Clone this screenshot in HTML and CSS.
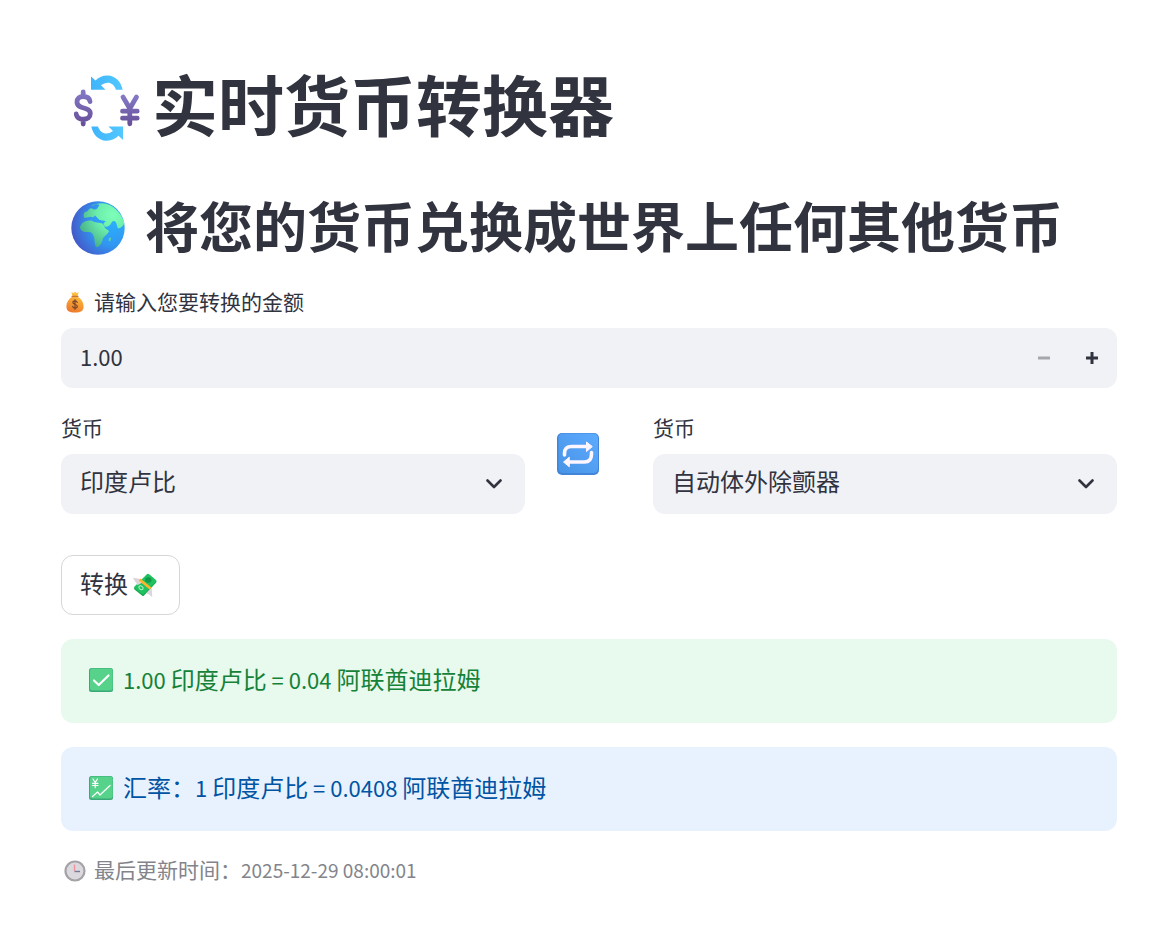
FILE: index.html
```html
<!DOCTYPE html>
<html lang="zh-CN">
<head>
<meta charset="utf-8">
<meta name="viewport" content="width=device-width, initial-scale=1">
<title>实时货币转换器</title>
<link rel="stylesheet" href="styles.css">
</head>
<body>
<main class="page">
  <h1 class="title">
    <svg class="title-icon" viewBox="0 0 66 66" aria-hidden="true">
      <defs>
        <linearGradient id="arrow" x1="0" x2="1" y1="0" y2="0"><stop offset="0" stop-color="#3fb4fb"/><stop offset="1" stop-color="#52c8ff"/></linearGradient>
        <linearGradient id="sign" x1="0" x2="0" y1="0" y2="1"><stop offset="0" stop-color="#8378c4"/><stop offset="1" stop-color="#68509a"/></linearGradient>
      </defs>
      <path d="M17 1.500v13.200h14.500L27 10.200c6-4.500 12.500-3 15 4.500h6.700C47 6.500 41 .8 34 .6 28.500.4 24.500 2.500 21.500 5.500Z" fill="url(#arrow)"/>
      <path d="M49 65V51.500H34.500L39 56c-6 4.500-12.500 3-15-4.500h-6.700C19 60 25 65.500 32 65.700c5.500.2 9.500-1.900 12.500-4.900Z" fill="url(#arrow)"/>
      <g fill="none" stroke="url(#sign)" stroke-width="4.800" stroke-linecap="round" stroke-linejoin="round">
        <path d="M16 26.500c-.5-3.500-3.400-5-6.800-5C5.500 21.500 3 23.500 3 27c0 8 13.300 4 13.300 11.500 0 3.700-3 5.700-7 5.700-3.800 0-6.600-1.700-7.100-5.200M9.200 17v4.500M9.200 44.500v4.500"/>
        <path d="M49 22l6.800 11.500L62.500 22M55.800 33.500v15.300M48.500 36.200h14.700M48.500 43.200h14.700"/>
      </g>
    </svg>
    <span class="title-text">实时货币转换器</span>
  </h1>
  <h2 class="subtitle">
    <svg class="subtitle-icon" viewBox="0 0 54 54" aria-hidden="true">
      <defs>
        <radialGradient id="sea" cx=".8" cy=".4" r=".85"><stop offset="0" stop-color="#2caefb"/><stop offset=".5" stop-color="#3197f2"/><stop offset="1" stop-color="#4652c4"/></radialGradient>
        <radialGradient id="land" gradientUnits="userSpaceOnUse" cx="42" cy="14" r="36"><stop offset="0" stop-color="#7dffb9"/><stop offset=".45" stop-color="#6cedab"/><stop offset="1" stop-color="#46b08a"/></radialGradient>
        <clipPath id="globe"><circle cx="27" cy="27" r="26.700"/></clipPath>
      </defs>
      <circle cx="27" cy="27" r="26.700" fill="url(#sea)"/>
      <g clip-path="url(#globe)" fill="url(#land)">
        <path d="M20 5c5-3 12-3.500 16-2 9 3 15 11 17.500 19-1 2-3 5-6 5.500-2-1-1-5-3.500-7-2-1-3 0-4 2s-4 4-6 3c-2-2-2-4 1-5-3-1.500-5 0-7-2l-4-4-2 2c-3-2-5 1-9 0-1-3 0-6 3-6 2-1 2-4 5-3 2 2 5 1 6-1s2-3 0-3c-3-1-5 2-7 1.500Z"/>
        <path d="M14 20.500c4-1.500 7-1.500 9 .5l6 1c3 0 4 2 5 5l4 3c-1 4-6 5-6.500 9-.5 3-3 7-5.500 7s-2-6-3-10c-1-3-2-5-6-5-5 .5-8-2-8-5 1-3 3-5 5-5.500Z"/>
        <path d="M38 37l2.200-.5-1 4-1.700-.8Z"/>
      </g>
    </svg>
    <span class="subtitle-text">将您的货币兑换成世界上任何其他货币</span>
  </h2>

  <form class="converter" onsubmit="return false">
    <label class="label" for="amount">
      <svg class="label-icon" viewBox="0 0 22 22" aria-hidden="true">
        <defs><linearGradient id="bag" x1=".6" x2=".3" y1="0" y2="1"><stop offset="0" stop-color="#ffc83f"/><stop offset="1" stop-color="#ec772b"/></linearGradient></defs>
        <path d="M7.300 1.200 9.600 2l1.400-1.300L12.500 2l2.200-.8-1.400 4.300c4.300 2.500 6.300 6 6.300 10 0 4.500-3 6-8.600 6s-8.600-1.500-8.600-6c0-4 2-7.500 6.300-10Z" fill="url(#bag)"/>
        <path d="M8 5.300h6" stroke="#c87436" stroke-width="1.200" stroke-linecap="round"/>
        <path d="M13.200 11.400c-.4-1.100-1.200-1.500-2.200-1.500-1.200 0-2.100.6-2.100 1.700 0 2.500 4.400 1.300 4.400 3.700 0 1.200-1 1.800-2.200 1.800-1.300 0-2.200-.6-2.400-1.700M11 8.700v9.600" fill="none" stroke="#76442b" stroke-width="1.200" stroke-linecap="round"/>
      </svg>
      <span>请输入您要转换的金额</span>
    </label>
    <div class="field amount">
      <input class="amount-input" id="amount" type="text" inputmode="decimal" value="1.00">
      <button class="step" type="button" aria-label="减少" disabled>
        <svg class="step-icon" viewBox="0 0 12 12" aria-hidden="true"><path d="M0 6h12"/></svg>
      </button>
      <button class="step" type="button" aria-label="增加">
        <svg class="step-icon" viewBox="0 0 12 12" aria-hidden="true"><path d="M0 6h12M6 0v12"/></svg>
      </button>
    </div>

    <div class="pair">
      <div>
        <label class="label" for="from"><span>货币</span></label>
        <div class="field">
          <select class="select" id="from"><option>印度卢比</option></select>
          <svg class="chevron" viewBox="0 0 16 10" aria-hidden="true"><path d="M1.500 1.500 8 8l6.500-6.500"/></svg>
        </div>
      </div>
      <svg class="swap" viewBox="0 0 42 42" role="img" aria-label="互换">
        <defs>
          <linearGradient id="tile" x1="1" x2="0" y1="0" y2="1"><stop offset="0" stop-color="#5dabff"/><stop offset="1" stop-color="#4793e6"/></linearGradient>
        </defs>
        <rect width="42" height="42" rx="5" fill="#4285d8"/>
        <rect x="1.500" y=".5" width="39.500" height="39.500" rx="4.500" fill="url(#tile)"/>
        <path d="M7.500 22v-1.500c0-4.500 2.500-7 7-7H30M34.500 19.500V21c0 5.500-2.500 8-7 8H11" fill="none" stroke="#fdf5ff" stroke-width="3.600" stroke-linecap="round"/>
        <path d="M29.500 9v9.500l5.800-4.900ZM12.300 24.200v9.600L6.500 29Z" fill="#fdf5ff" stroke="#fdf5ff" stroke-linejoin="round"/>
      </svg>
      <div>
        <label class="label" for="to"><span>货币</span></label>
        <div class="field">
          <select class="select" id="to"><option>自动体外除颤器</option></select>
          <svg class="chevron" viewBox="0 0 16 10" aria-hidden="true"><path d="M1.500 1.500 8 8l6.500-6.500"/></svg>
        </div>
      </div>
    </div>

    <button class="convert" type="submit">
      <span>转换</span>
      <svg class="text-icon" viewBox="0 0 24 24" aria-hidden="true">
        <path d="M.5 5 9 6.500l2 3-6.500 3.500c0-2.500-1-3-1.500-4C2 7.500 1 7 .5 5ZM12.500 19l5.500-5.500 1.300 10.300c-1-1.300-2-1.300-2.800-2.800Z" fill="#d5cdd6"/>
        <path d="M1.500 14.500 14 1.500q1-1 2 0l7 6.200q1 1 0 2L11 22.500q-1 1-2 0l-7.500-6q-1-1 0-2Z" fill="#17a64f"/>
        <path d="M1.500 13.500 14 1.200q1-.8 2 0l7 5.700q.8.800 0 1.800L11 21q-1 .8-2 0l-7.500-5.700q-.8-.8 0-1.800Z" fill="#1fc25f"/>
        <ellipse cx="15.300" cy="7" rx="3.200" ry="2.700" fill="#12994a"/>
        <ellipse cx="8" cy="14.700" rx="2.300" ry="1.700" transform="rotate(35 8 14.700)" fill="none" stroke="#b9f2cf"/>
        <path d="M0 4.800 6.500 6 10 9.300l-5.800 3c.2-1.500-.7-2.300-1.700-3.300Z" fill="#ddd5dd"/>
        <path d="m13 20.500 5.500-6 .5 9.500c-1-1.200-2-2-3-2.700Z" fill="#ddd5dd"/>
        <path d="m6.500 6.500 11 9" stroke="#ffb52b" stroke-width="2.800"/>
      </svg>
    </button>
  </form>

  <p class="alert success">
    <svg class="text-icon" viewBox="0 0 24 24" aria-hidden="true">
      <rect width="24" height="24" rx="2.500" fill="#3aa878"/><rect x="1" y=".5" width="22.700" height="22" rx="2.200" fill="#57d28a"/>
      <path d="m5 12.500 4.700 4.500L19.500 7.500" fill="none" stroke="#fff" stroke-width="2.200" stroke-linecap="round" stroke-linejoin="round"/>
    </svg>
    <span class="alert-text"><span class="latin">1.00 </span>印度卢比<span class="latin"> = 0.04 </span>阿联酋迪拉姆</span>
  </p>
  <p class="alert info">
    <svg class="text-icon" viewBox="0 0 24 24" aria-hidden="true">
      <rect width="24" height="24" rx="2.500" fill="#3aa878"/><rect x="1" y=".5" width="22.700" height="22" rx="2.200" fill="#57d28a"/>
      <path d="m4 3 2.200 3.500L8.500 3M6.200 6.500v5.200M3.500 7.300h5.500M3.500 9.500h5.500M3.500 20.500l5-4.500 2.500 3 10-9.500" fill="none" stroke="#fff" stroke-width="1.200" stroke-linecap="round" stroke-linejoin="round"/>
    </svg>
    <span class="alert-text">汇率：<span class="latin">1 </span>印度卢比<span class="latin"> = 0.0408 </span>阿联酋迪拉姆</span>
  </p>

  <p class="caption">
    <svg class="label-icon" viewBox="0 0 22 22" aria-hidden="true">
      <circle cx="11" cy="11" r="9.500" fill="#dcd9de" stroke="#a5a2a7" stroke-width="2.200"/>
      <path d="M10.500 4.500V11" stroke="#f3929f" stroke-width="1.400"/>
      <path d="M10.500 11.500H16" stroke="#777894" stroke-width="1.400"/>
    </svg>
    <span>最后更新时间：<time class="latin">2025-12-29 08:00:01</time></span>
  </p>
</main>
</body>
</html>
```
FILE: styles.css
```css
* {
  box-sizing: border-box;
}

body {
  margin: 0;
  background: #fff;
  color: #31333f;
  font-family: "Noto Sans CJK SC", sans-serif;
  font-size: 24px;
  line-height: 36px;
}

svg {
  display: block;
  flex: none;
}

.page {
  padding: 68px 53px 54px 61px;
}

.title,
.subtitle {
  display: flex;
  align-items: center;
  margin: 0;
  font-weight: 700;
}

.title {
  gap: 12px;
  padding-left: 13px;
  font-size: 66px;
  line-height: 68px;
}

.title-text {
  padding-bottom: 12px;
}

.title-icon {
  width: 66px;
  height: 66px;
}

.subtitle {
  gap: 20px;
  margin-top: 48px;
  padding-left: 10px;
  font-size: 54px;
  line-height: 58px;
}

.subtitle-text {
  padding-bottom: 6px;
}

.subtitle-icon {
  width: 54px;
  height: 54px;
}

.converter {
  margin-top: 26px;
}

.label,
.caption {
  display: flex;
  align-items: center;
  gap: 8px;
  font-size: 21px;
  line-height: 30px;
}

.label {
  margin-bottom: 10px;
}

.label > span,
.caption > span {
  padding-bottom: 2px;
}

.label-icon {
  width: 22px;
  height: 22px;
  margin-left: 3px;
}

.field {
  position: relative;
  display: flex;
  height: 60px;
  border-radius: 12px;
  background: #f0f2f6;
  overflow: hidden;
}

.amount-input,
.select {
  flex: 1;
  min-width: 0;
  padding: 0 19px;
  border: 0;
  background: transparent;
  color: inherit;
  font: inherit;
}

.amount-input {
  padding-bottom: 4px;
  font-size: 22px;
}

.select {
  appearance: none;
  padding-bottom: 6px;
}

.step {
  display: grid;
  place-items: center;
  width: 46px;
  padding: 0;
  border: 0;
  background: transparent;
  color: #31333f;
}

.step:disabled {
  color: #a6a7ad;
}

.step:last-child {
  width: 50px;
}

.step-icon {
  width: 12px;
  height: 12px;
  fill: none;
  stroke: currentColor;
  stroke-width: 3;
}

.chevron {
  position: absolute;
  top: 25px;
  right: 23px;
  width: 16px;
  height: 10px;
  fill: none;
  stroke: #31333f;
  stroke-width: 2.6;
  stroke-linecap: round;
  stroke-linejoin: round;
  pointer-events: none;
}

.pair {
  display: grid;
  grid-template-columns: 1fr 80px 1fr;
  gap: 24px;
  margin-top: 24px;
}

.swap {
  width: 42px;
  height: 42px;
  margin: 21px 8px;
}

.convert {
  display: flex;
  align-items: center;
  gap: 5px;
  height: 60px;
  margin-top: 41px;
  padding: 0 22px 0 18px;
  border: 1px solid #d6d6d9;
  border-radius: 12px;
  background: #fff;
  color: inherit;
  font: inherit;
}

.convert > span {
  padding-bottom: 4px;
}

.text-icon {
  width: 24px;
  height: 24px;
}

.latin {
  font-size: 22px;
}

.alert {
  display: flex;
  align-items: center;
  gap: 10px;
  margin: 24px 0 0;
  padding: 23px 28px 25px;
  border-radius: 12px;
}

.alert-text {
  line-height: 34px;
  padding-bottom: 2px;
}

.success {
  background: #e8f9ee;
  color: #158237;
}

.info {
  background: #e8f2ff;
  color: #0054a3;
}

.caption {
  margin: 23px 0 0;
  color: #83848b;
}

.caption .latin {
  font-size: 19px;
}
```
